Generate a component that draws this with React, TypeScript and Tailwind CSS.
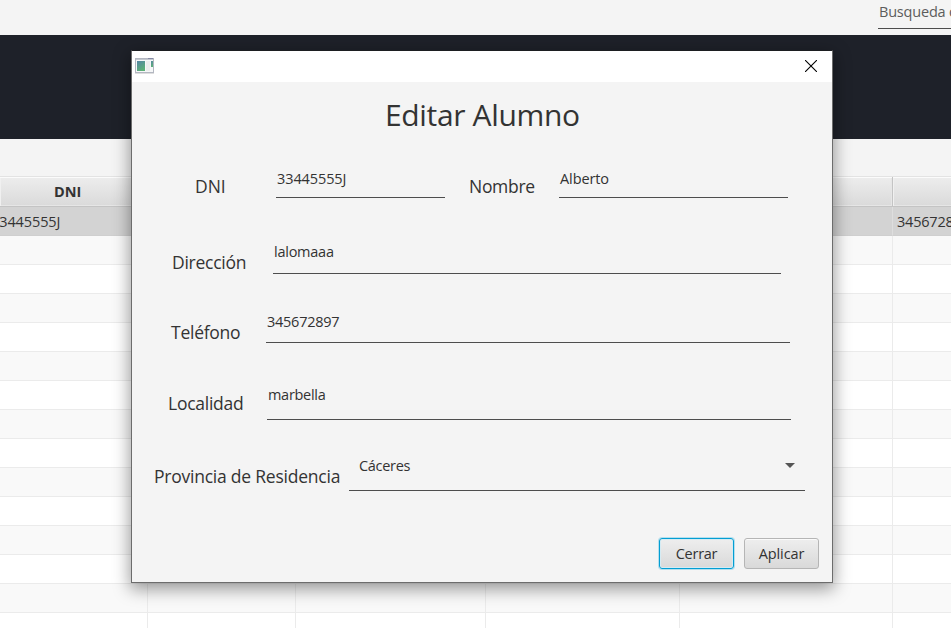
import React from 'react';

type FieldProps = { value: string; box: string; text: string; children?: React.ReactNode };

function Field({ value, box, text, children }: FieldProps) {
  return (
    <div className={`flex h-full shrink-0 items-end justify-between border-b border-[#4d4d4d] ${box}`}>
      <span className={`block whitespace-nowrap text-[14.5px] leading-5 text-[#323232] ${text}`}>{value}</span>
      {children}
    </div>
  );
}

function Label({ text, box }: { text: string; box: string }) {
  return (
    <label className={`shrink-0 self-end whitespace-nowrap text-[17.5px] leading-6 text-[#333] ${box}`}>{text}</label>
  );
}

const columns = 'grid w-[1100px] grid-cols-[148px_148px_190px_194px_213px_207px]';
const cells = [0, 1, 2, 3, 4, 5];
const emptyRows = Array.from({ length: 14 }, (_, i) => i);

function Table() {
  return (
    <div className="flex-1 overflow-hidden border-t border-[#e3e3e3] bg-white">
      <div className={`${columns} h-[30px] border-b border-[#c4c4c4]`}>
        {cells.map((c) => (
          <div
            key={c}
            className="flex items-center border-r border-[#c4c4c4] bg-linear-to-b from-[#ededed] to-[#dadada] text-[14.5px] font-bold text-[#333] shadow-[inset_0_1px_0_#fbfbfb,inset_1px_0_0_#f0f0f0,inset_-1px_-1px_0_#e6e6e6]"
          >
            {c === 0 && <span className="ml-[54px]">DNI</span>}
          </div>
        ))}
      </div>
      <div className={`${columns} h-[29px] bg-[#d3d3d3] text-[14.5px] leading-[29px] text-[#333]`}>
        {cells.map((c) => (
          <div key={c} className="overflow-hidden whitespace-nowrap border-r border-b border-[#dedede] border-b-[#cfcfcf]">
            {c === 0 && <span className="-ml-[9px] tracking-[-0.1px]">33445555J</span>}
            {c === 5 && <span className="ml-1 tracking-[-0.2px]">345672897</span>}
          </div>
        ))}
      </div>
      {emptyRows.map((r) => (
        <div key={r} className={`${columns} h-[29px] ${r % 2 === 0 ? 'bg-[#f9f9f9]' : 'bg-white'}`}>
          {cells.map((c) => (
            <div key={c} className="border-r border-b border-[#ebebeb]" />
          ))}
        </div>
      ))}
    </div>
  );
}

function WindowIcon() {
  return (
    <svg width="19" height="16" viewBox="0 0 19 16">
      <defs>
        <linearGradient id="pane" x1="0" y1="0" x2="0.5" y2="1">
          <stop offset="0" stopColor="#5585a4" />
          <stop offset="1" stopColor="#5cb077" />
        </linearGradient>
      </defs>
      <rect x="0.5" y="0.5" width="18" height="14" fill="#f6f7f8" stroke="#b3b7c1" />
      <path d="M1 1.500H18" stroke="#c4c8cf" />
      <path d="M13 0.500H18" stroke="#8589a5" />
      <rect x="2" y="3" width="8" height="10" fill="url(#pane)" />
      <rect x="11" y="3" width="4" height="10" fill="#ededed" />
      <rect x="16" y="3" width="2" height="6" fill="url(#pane)" />
      <path d="M0 15.500H19" stroke="#dedede" />
    </svg>
  );
}

function Dialog() {
  return (
    <div className="absolute left-[131px] top-[50px] flex h-[533px] w-[702px] flex-col border border-[#6c6c6c] border-t-[#1c1e21] bg-[#f4f4f4] shadow-[0_5px_16px_1px_rgba(0,0,0,0.4)]">
      <div className="flex h-[31px] shrink-0 items-start justify-between bg-white pl-[3px] pr-[15px] pt-[7px]">
        <WindowIcon />
        <svg className="mt-[2px]" width="12" height="12" viewBox="0 0 12 12">
          <path d="M0 0L12 12M12 0L0 12" stroke="#000" strokeWidth="1.1" />
        </svg>
      </div>
      <h1 className="h-[68px] shrink-0 pl-[253px] pt-[12px] text-[30px] leading-[42px] tracking-[-0.35px] text-[#333]">Editar Alumno</h1>
      <div className="flex h-[48px] shrink-0">
        <Label text="DNI" box="ml-[63px] w-[81px]" />
        <Field value="33445555J" box="w-[169px] pl-px" text="mb-[8px] tracking-[-0.1px]" />
        <Label text="Nombre" box="ml-[24px] w-[90px] tracking-[-0.3px]" />
        <Field value="Alberto" box="w-[229px] pl-px" text="mb-[8px] tracking-[-0.1px]" />
      </div>
      <div className="flex h-[76px] shrink-0">
        <Label text="Dirección" box="ml-[40px] w-[101px] tracking-[-0.25px]" />
        <Field value="lalomaaa" box="w-[508px] pl-px" text="mb-[11px] tracking-[-0.25px]" />
      </div>
      <div className="flex h-[69px] shrink-0">
        <Label text="Teléfono" box="ml-[39px] w-[95px] -mb-px tracking-[-0.25px]" />
        <Field value="345672897" box="w-[524px] pl-px" text="mb-[10px] tracking-[-0.25px]" />
      </div>
      <div className="flex h-[77px] shrink-0">
        <Label text="Localidad" box="ml-[36px] mb-[5px] w-[99px] tracking-[-0.25px]" />
        <Field value="marbella" box="w-[524px] pl-px" text="mb-[14px] tracking-[-0.3px]" />
      </div>
      <div className="flex h-[71px] shrink-0">
        <Label text="Provincia de Residencia" box="ml-[22px] mb-[3px] w-[195px] tracking-[-0.23px]" />
        <Field value="Cáceres" box="w-[456px] pl-[10px] pr-[10px]" text="mb-[14px] tracking-[-0.3px]">
          <svg className="mb-[22px]" width="10" height="5" viewBox="0 0 10 5">
            <path d="M0 0H10L5 5Z" fill="#555" />
          </svg>
        </Field>
      </div>
      <div className="mt-[47px] flex justify-end gap-[10px] pr-[13px]">
        <button className="h-[31px] w-[75px] rounded-[3px] border border-[#039ed3] bg-linear-to-b from-[#eee] to-[#d9d9d9] text-[14.5px] leading-[29px] tracking-[-0.25px] text-[#333] shadow-[0_0_0_1px_#b5dfed,inset_0_0_0_1px_#d5ebf3]">
          Cerrar
        </button>
        <button className="h-[31px] w-[75px] rounded-[3px] border border-[#b5b5b5] bg-linear-to-b from-[#eee] to-[#d9d9d9] text-[14.5px] leading-[29px] tracking-[-0.1px] text-[#333] shadow-[inset_0_1px_0_#fafafa]">
          Aplicar
        </button>
      </div>
    </div>
  );
}

export default function App() {
  return (
    <div className="relative flex h-[628px] w-[951px] flex-col overflow-hidden bg-[#f4f4f4] font-['Open_Sans','Noto_Sans',sans-serif]">
      <div className="flex h-[35px] shrink-0 justify-end">
        <div className="h-[29px] w-[73px] overflow-hidden whitespace-nowrap border-b border-[#4d4d4d] pl-px pt-[2px] text-[14.5px] leading-5 tracking-[-0.2px] text-[#5c5c5c]">
          Busqueda de
        </div>
      </div>
      <div className="h-[104px] shrink-0 bg-[#1e2129]" />
      <div className="h-[37px] shrink-0" />
      <Table />
      <Dialog />
    </div>
  );
}
